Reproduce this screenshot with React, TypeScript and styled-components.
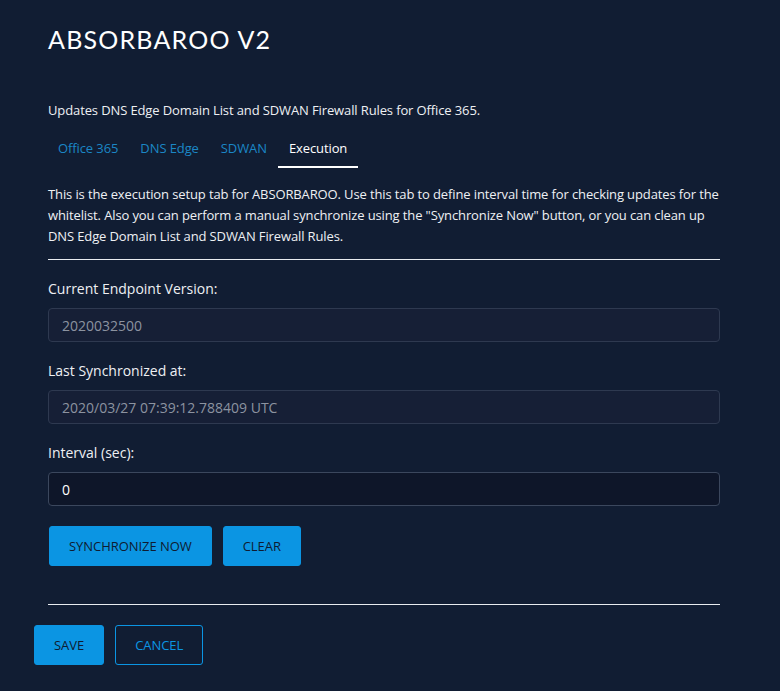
import React from 'react';
import styled, { createGlobalStyle } from 'styled-components';

const COLOR = {
    BG: '#111d33',
    TEXT: '#eef0f3',
    MUTED: '#8c93a0',
    BLUE: '#0b95e3',
    TAB: '#1b87c6',
    INPUT_BG: '#161f36',
    INPUT_BORDER: '#2e3950',
    FIELD_BG: '#0e1629',
    FIELD_BORDER: '#3b475d',
};

const GlobalStyle = createGlobalStyle`
    html, body {
        margin: 0;
        padding: 0;
        background: ${COLOR.BG};
    }
    body {
        font-family: "Open Sans", "Noto Sans", sans-serif;
        color: ${COLOR.TEXT};
    }
`;

const tabs = ['Office 365', 'DNS Edge', 'SDWAN', 'Execution'];

interface IField {
    label: string;
    value: string;
    editable?: boolean;
}

const fields: IField[] = [
    { label: 'Current Endpoint Version:', value: '2020032500' },
    { label: 'Last Synchronized at:', value: '2020/03/27 07:39:12.788409 UTC' },
    { label: 'Interval (sec):', value: '0', editable: true },
];

const App = () => {
    return (
        <Page>
            <GlobalStyle />
            <Content>
                <Title>ABSORBAROO V2</Title>
                <Description>Updates DNS Edge Domain List and SDWAN Firewall Rules for Office 365.</Description>
                <TabBar>
                    {tabs.map((tab) => (
                        <Tab key={tab} active={tab === 'Execution'}>{tab}</Tab>
                    ))}
                </TabBar>
                <Intro>
                    This is the execution setup tab for ABSORBAROO. Use this tab to define interval time for checking updates for the
                    whitelist. Also you can perform a manual synchronize using the "Synchronize Now" button, or you can clean up
                    DNS Edge Domain List and SDWAN Firewall Rules.
                </Intro>
                <Divider />
                {fields.map((field) => (
                    <FieldGroup key={field.label}>
                        <Label>{field.label}</Label>
                        <Input editable={!!field.editable}>{field.value}</Input>
                    </FieldGroup>
                ))}
                <Actions>
                    <Button>SYNCHRONIZE NOW</Button>
                    <Button>CLEAR</Button>
                </Actions>
                <Divider />
            </Content>
            <Footer>
                <Button>SAVE</Button>
                <Button outlined>CANCEL</Button>
            </Footer>
        </Page>
    );
};

const Page = styled.div`
    width: 780px;
    height: 691px;
    box-sizing: border-box;
    padding: 24px 0 0 34px;
    background: ${COLOR.BG};
`;

const Content = styled.div`
    width: 672px;
    margin-left: 14px;
    display: flex;
    flex-direction: column;
`;

const Title = styled.h1`
    margin: 0;
    font-family: Lato, "Open Sans", sans-serif;
    font-weight: 400;
    font-size: 25px;
    line-height: 30px;
    letter-spacing: 1.2px;
    color: #ffffff;
`;

const Description = styled.p`
    margin: 46px 0 0;
    font-size: 13px;
    line-height: 20px;
    letter-spacing: -0.12px;
`;

const TabBar = styled.div`
    display: flex;
    margin: 13px 0 0 -1px;
`;

const Tab = styled.div<{ active?: boolean }>`
    padding: 6px 11px 9px;
    font-size: 13px;
    line-height: 18px;
    letter-spacing: -0.1px;
    color: ${(p) => (p.active ? '#ffffff' : COLOR.TAB)};
    border-bottom: 2px solid ${(p) => (p.active ? '#ffffff' : 'transparent')};
`;

const Intro = styled.p`
    margin: 16px 0 0;
    font-size: 13px;
    line-height: 21px;
    letter-spacing: -0.12px;
`;

const Divider = styled.hr`
    margin: 12px 0 0;
    border: none;
    border-top: 1px solid #e8ebef;
    width: 100%;
`;

const FieldGroup = styled.div`
    display: flex;
    flex-direction: column;
    margin-top: 19px;
`;

const Label = styled.label`
    font-size: 14px;
    line-height: 20px;
    color: ${COLOR.TEXT};
`;

const Input = styled.div<{ editable: boolean }>`
    margin-top: 9px;
    height: 34px;
    box-sizing: border-box;
    padding: 0 13px;
    display: flex;
    align-items: center;
    font-size: 14px;
    border-radius: 4px;
    background: ${(p) => (p.editable ? COLOR.FIELD_BG : COLOR.INPUT_BG)};
    border: 1px solid ${(p) => (p.editable ? COLOR.FIELD_BORDER : COLOR.INPUT_BORDER)};
    color: ${(p) => (p.editable ? '#ffffff' : COLOR.MUTED)};
`;

const Actions = styled.div`
    display: flex;
    gap: 11px;
    margin-top: 20px;
    margin-bottom: 26px;
    padding-left: 1px;
`;

const Button = styled.button<{ outlined?: boolean }>`
    height: 40px;
    padding: 0 19px;
    border-radius: 3px;
    font-family: "Open Sans", "Noto Sans", sans-serif;
    font-size: 13px;
    letter-spacing: -0.05px;
    cursor: pointer;
    background: ${(p) => (p.outlined ? 'transparent' : COLOR.BLUE)};
    color: ${(p) => (p.outlined ? COLOR.BLUE : '#0f1b31')};
    border: 1px solid ${COLOR.BLUE};
`;

const Footer = styled.div`
    display: flex;
    gap: 11px;
    margin-top: 20px;
`;

export default App;
